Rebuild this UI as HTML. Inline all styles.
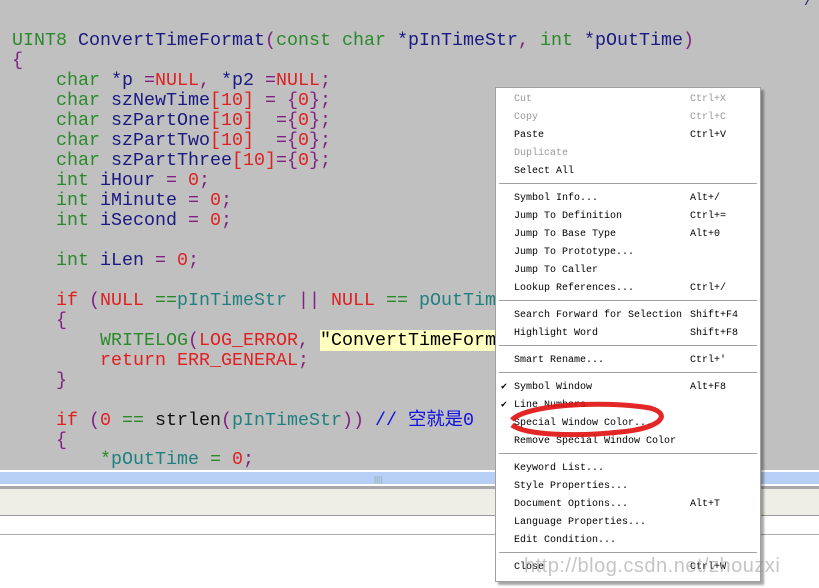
<!DOCTYPE html>
<html><head><meta charset="utf-8"><style>
body{margin:0;width:819px;height:588px;overflow:hidden;background:#fff;position:relative;font-family:"Liberation Mono",monospace}
#code{position:absolute;left:0;top:0;width:819px;height:470px;background:#c0c0c0}
.l{position:absolute;left:12px;font-family:"Liberation Mono","Noto Sans CJK SC",monospace;font-size:18.33px;line-height:20px;white-space:pre;color:#1a1a80}
.g{color:#2a8a2a}.b{color:#1a1a80}.r{color:#e02020}.p{color:#802080}.t{color:#208080}.k{color:#111}.c{color:#1010e0}
.s{background:#ffffc0;color:#000}
#menu{position:absolute;left:495px;top:87px;width:264px;height:493px;background:#fff;border:1px solid #a0a0a0;box-shadow:3px 3px 2px rgba(0,0,0,.35);font-family:"Liberation Mono",monospace;font-size:10px}
.i{position:absolute;left:18px;height:18px;line-height:18px;white-space:pre;color:#000}
.i span{position:absolute;left:176px}
.d{color:#999}
.sep{position:absolute;left:3px;right:3px;height:1px;background:#a0a0a0;border-bottom:1px solid #fff}
.chk{position:absolute;left:-13px;font-size:10px}
</style></head><body>
<div id="code">
<div class="l" style="left:804px;top:-8px;font-size:14px">/</div>
<div class="l" style="top:31px"><span class="g">UINT8</span> ConvertTimeFormat<span class="p">(</span><span class="g">const char</span> *pInTimeStr<span class="p">,</span> <span class="g">int</span> *pOutTime<span class="p">)</span></div>
<div class="l p" style="top:51px">{</div>
<div class="l" style="top:71px">    <span class="g">char</span> *p <span class="p">=</span><span class="r">NULL</span><span class="p">,</span> *p2 <span class="p">=</span><span class="r">NULL</span><span class="p">;</span></div>
<div class="l" style="top:91px">    <span class="g">char</span> szNewTime<span class="r">[10]</span> <span class="p">=</span> <span class="p">{</span><span class="r">0</span><span class="p">};</span></div>
<div class="l" style="top:111px">    <span class="g">char</span> szPartOne<span class="r">[10]</span>  <span class="p">={</span><span class="r">0</span><span class="p">};</span></div>
<div class="l" style="top:131px">    <span class="g">char</span> szPartTwo<span class="r">[10]</span>  <span class="p">={</span><span class="r">0</span><span class="p">};</span></div>
<div class="l" style="top:151px">    <span class="g">char</span> szPartThree<span class="r">[10]</span><span class="p">={</span><span class="r">0</span><span class="p">};</span></div>
<div class="l" style="top:171px">    <span class="g">int</span> iHour <span class="p">=</span> <span class="r">0</span><span class="p">;</span></div>
<div class="l" style="top:191px">    <span class="g">int</span> iMinute <span class="p">=</span> <span class="r">0</span><span class="p">;</span></div>
<div class="l" style="top:211px">    <span class="g">int</span> iSecond <span class="p">=</span> <span class="r">0</span><span class="p">;</span></div>
<div class="l" style="top:251px">    <span class="g">int</span> iLen <span class="p">=</span> <span class="r">0</span><span class="p">;</span></div>
<div class="l" style="top:291px">    <span class="r">if</span> <span class="p">(</span><span class="r">NULL</span> <span class="g">==</span><span class="t">pInTimeStr</span> <span class="p">||</span> <span class="r">NULL</span> <span class="g">==</span> <span class="t">pOutTim</span></div>
<div class="l p" style="top:311px">    {</div>
<div class="l" style="top:331px">        <span class="g">WRITELOG</span><span class="p">(</span><span class="r">LOG_ERROR</span><span class="p">,</span> <span class="s">"ConvertTimeForm</span></div>
<div class="l" style="top:351px">        <span class="r">return ERR_GENERAL</span><span class="p">;</span></div>
<div class="l p" style="top:371px">    }</div>
<div class="l" style="top:411px">    <span class="r">if</span> <span class="p">(</span><span class="r">0</span> <span class="g">==</span> <span class="k">strlen</span><span class="p">(</span><span class="t">pInTimeStr</span><span class="p">))</span> <span class="c">// 空就是0</span></div>
<div class="l p" style="top:431px">    {</div>
<div class="l" style="top:450px">        <span class="g">*</span><span class="t">pOutTime</span> <span class="g">=</span> <span class="r">0</span><span class="p">;</span></div>
</div>
<div style="position:absolute;left:0;top:470px;width:819px;height:2px;background:#fff"></div>
<div style="position:absolute;left:0;top:472px;width:819px;height:12px;background:#b8cff5"></div>
<div style="position:absolute;left:374px;top:475px;font-size:8px;color:#8aa;font-family:'Liberation Sans',sans-serif">||||</div>
<div style="position:absolute;left:0;top:484px;width:819px;height:2px;background:#fff"></div>
<div style="position:absolute;left:0;top:486px;width:819px;height:3px;background:#a8a8a8"></div>
<div style="position:absolute;left:0;top:489px;width:819px;height:26px;background:#eeede6"></div>
<div style="position:absolute;left:0;top:515px;width:819px;height:1px;background:#999"></div>
<div style="position:absolute;left:0;top:534px;width:819px;height:1px;background:#aaa"></div>
<div id="menu">
<div class="i d" style="top:3px">Cut<span>Ctrl+X</span></div>
<div class="i d" style="top:21px">Copy<span>Ctrl+C</span></div>
<div class="i" style="top:39px">Paste<span>Ctrl+V</span></div>
<div class="i d" style="top:57px">Duplicate</div>
<div class="i" style="top:75px">Select All</div>
<div class="sep" style="top:95px"></div>
<div class="i" style="top:102px">Symbol Info...<span>Alt+/</span></div>
<div class="i" style="top:120px">Jump To Definition<span>Ctrl+=</span></div>
<div class="i" style="top:138px">Jump To Base Type<span>Alt+0</span></div>
<div class="i" style="top:156px">Jump To Prototype...</div>
<div class="i" style="top:174px">Jump To Caller</div>
<div class="i" style="top:192px">Lookup References...<span>Ctrl+/</span></div>
<div class="sep" style="top:212px"></div>
<div class="i" style="top:219px">Search Forward for Selection<span>Shift+F4</span></div>
<div class="i" style="top:237px">Highlight Word<span>Shift+F8</span></div>
<div class="sep" style="top:257px"></div>
<div class="i" style="top:264px">Smart Rename...<span>Ctrl+'</span></div>
<div class="sep" style="top:284px"></div>
<div class="i" style="top:291px"><b class="chk">✔</b>Symbol Window<span>Alt+F8</span></div>
<div class="i" style="top:309px"><b class="chk">✔</b>Line Numbers</div>
<div class="i" style="top:327px">Special Window Color...</div>
<div class="i" style="top:345px">Remove Special Window Color</div>
<div class="sep" style="top:365px"></div>
<div class="i" style="top:372px">Keyword List...</div>
<div class="i" style="top:390px">Style Properties...</div>
<div class="i" style="top:408px">Document Options...<span>Alt+T</span></div>
<div class="i" style="top:426px">Language Properties...</div>
<div class="i" style="top:444px">Edit Condition...</div>
<div class="sep" style="top:464px"></div>
<div class="i" style="top:471px">Close<span>Ctrl+W</span></div>
</div>
<svg style="position:absolute;left:0;top:0" width="819" height="588">
<path d="M512 420 C525 405,600 400,650 408 C672 414,662 428,620 432 C575 437,525 435,512 425" fill="none" stroke="#e01010" stroke-width="5" opacity="0.9"/>
</svg>
<div style="position:absolute;left:524px;top:555px;font-family:'Liberation Sans',sans-serif;font-size:20px;color:rgba(150,150,150,0.55);white-space:pre;letter-spacing:0.5px">http://blog.csdn.net/zhouzxi</div>
</body></html>
